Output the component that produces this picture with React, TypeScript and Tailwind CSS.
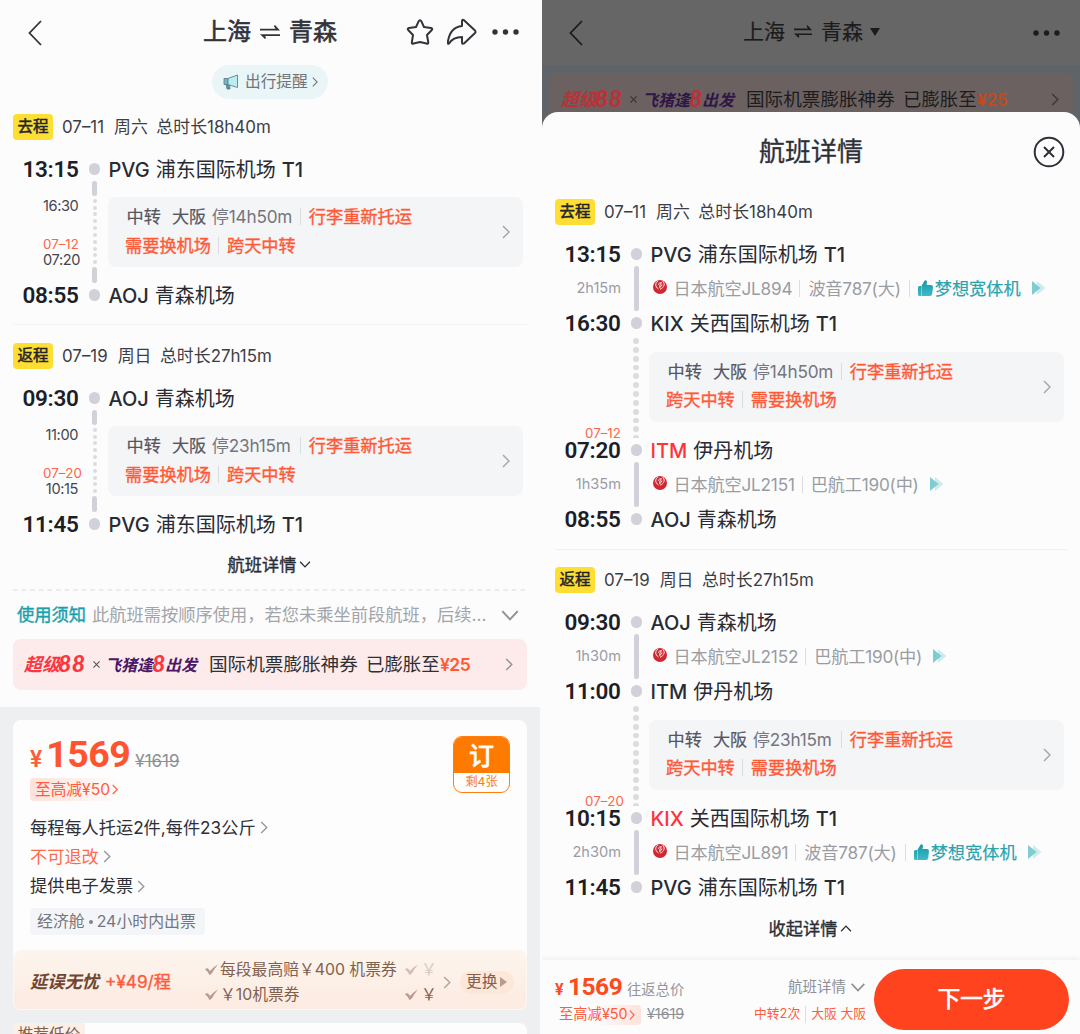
import clsx from "clsx";

const trips = [
  {
    tag: "去程",
    date: "07–11",
    weekday: "周六",
    total: "总时长18h40m",
    start: { time: "13:15", code: "PVG", name: "浦东国际机场", terminal: "T1" },
    end: { time: "08:55", code: "AOJ", name: "青森机场", terminal: "" },
    arrive: "16:30",
    nextDate: "07–12",
    depart: "07:20",
    stop: "停14h50m",
  },
  {
    tag: "返程",
    date: "07–19",
    weekday: "周日",
    total: "总时长27h15m",
    start: { time: "09:30", code: "AOJ", name: "青森机场", terminal: "" },
    end: { time: "11:45", code: "PVG", name: "浦东国际机场", terminal: "T1" },
    arrive: "11:00",
    nextDate: "07–20",
    depart: "10:15",
    stop: "停23h15m",
  },
];

const details = [
  {
    first: { duration: "2h15m", flight: "日本航空JL894", plane: "波音787(大)", dream: true },
    mid1: { time: "16:30", code: "KIX", name: "关西国际机场", terminal: "T1" },
    mid2: { time: "07:20", code: "ITM", name: "伊丹机场", terminal: "" },
    second: { duration: "1h35m", flight: "日本航空JL2151", plane: "巴航工190(中)", dream: false },
  },
  {
    first: { duration: "1h30m", flight: "日本航空JL2152", plane: "巴航工190(中)", dream: false },
    mid1: { time: "11:00", code: "ITM", name: "伊丹机场", terminal: "" },
    mid2: { time: "10:15", code: "KIX", name: "关西国际机场", terminal: "T1" },
    second: { duration: "2h30m", flight: "日本航空JL891", plane: "波音787(大)", dream: true },
  },
];

type Trip = (typeof trips)[number];
type Point = { time: string; code: string; name: string; terminal: string };
type Leg = { duration: string; flight: string; plane: string; dream: boolean };

function Right({ className }: { className?: string }) {
  return (
    <svg viewBox="0 0 8 14" fill="none" stroke="currentColor" strokeWidth="1.5" className={clsx("shrink-0", className)}>
      <path d="M1 1l6 6-6 6" />
    </svg>
  );
}

function Down({ className }: { className?: string }) {
  return (
    <svg viewBox="0 0 16 10" fill="none" stroke="currentColor" strokeWidth="1.8" className={clsx("shrink-0", className)}>
      <path d="M1 1l7 7.5L15 1" />
    </svg>
  );
}

function Back() {
  return (
    <svg viewBox="0 0 14 26" className="w-3.5 h-[26px]" fill="none" stroke="currentColor" strokeWidth="1.8">
      <path d="M13 1L1.5 13 13 25" />
    </svg>
  );
}

function RoundTrip({ className }: { className?: string }) {
  return (
    <svg viewBox="0 0 20 14" className={className} fill="currentColor">
      <path d="M0 3.800h15.500L13.800 1l1.200-.9 5 5.500H0z" />
      <path d="M20 9.200H4.500H0l5 4.700 1-.9-.8-2H20z" />
    </svg>
  );
}

function Dots() {
  return (
    <svg viewBox="0 0 27 6" className="w-[27px] h-1.5" fill="currentColor">
      <circle cx="3" cy="3" r="2.700" />
      <circle cx="13.5" cy="3" r="2.700" />
      <circle cx="24" cy="3" r="2.700" />
    </svg>
  );
}

function Horn() {
  return (
    <svg viewBox="0 0 16 16" className="w-4 h-4 shrink-0" stroke="#67808a" strokeWidth=".9">
      <path d="M3 10h3.5l.5 5H4z" fill="#3d9fb0" />
      <path d="M1 4.5h4v6H1z" fill="#6db9c9" />
      <path d="M5 4.5L14.5 1v12.5L5 10.5z" fill="#b9edf4" />
    </svg>
  );
}

function Crane() {
  return (
    <svg viewBox="0 0 14 14" className="mb-[2px] w-3.5 h-3.5 shrink-0">
      <circle cx="7" cy="7" r="7" fill="#cf2831" />
      <path d="M5 .8C1.800 3 2 7 5.500 9" stroke="#fff" strokeWidth=".9" fill="none" />
      <path d="M9.300.8C12.500 3.500 11.500 7.500 7 9.200" stroke="#fff" strokeWidth=".9" fill="none" />
      <path d="M5 4.600Q6.500 2.200 8.700 2.800L7.200 4.200 6.600 7.500Q8.800 6.500 9 4.500" stroke="#fff" strokeWidth=".9" fill="none" />
    </svg>
  );
}

function Thumb() {
  return (
    <svg viewBox="0 0 15 16" className="w-[15px] h-4 shrink-0">
      <defs>
        <linearGradient id="thumb" x1="0" y1="0" x2="0" y2="1">
          <stop offset="0" stopColor="#1797a0" />
          <stop offset="1" stopColor="#3cbccb" />
        </linearGradient>
      </defs>
      <path
        d="M0 7.500Q0 6 1.500 6H3v10H1.500Q0 16 0 14.500zM3.400 6L6.500.8Q7.200 0 8.200.5 9.200 1.200 9 2.500L8.500 5H13q2 0 2 2l-.8 7q-.3 2-2.200 2H3.400z"
        fill="url(#thumb)"
      />
    </svg>
  );
}

function Forward() {
  return (
    <svg viewBox="0 0 14 14" className="w-3.5 h-3.5 shrink-0">
      <path d="M5 0l8.500 7L5 14z" fill="#cfebee" />
      <path d="M0 0l8.500 7L0 14z" fill="#7fccd2" />
    </svg>
  );
}

function Tick() {
  return (
    <svg viewBox="0 0 13 11" className="w-[13px] h-[11px] shrink-0" fill="#b99a8d">
      <path d="M0 5.200Q1.500 4 3 4.500L5 7Q8 3 13 .5 9.500 4.500 6.800 9.500L4.500 11Q3 7.500 0 5.200z" />
    </svg>
  );
}

function Divider({ className }: { className?: string }) {
  return <span className={clsx("w-px h-[17px] bg-[#dcdde0] shrink-0", className)} />;
}

function Promo({ dim }: { dim?: boolean }) {
  const red = dim ? "text-[#b83338]" : "text-[#fb3640]";
  const purple = dim ? "text-[#301548]" : "text-[#4b1667]";
  const ink = dim ? "text-[#1d1c1c]" : "text-[#303033]";
  return (
    <>
      <span className={clsx("flex w-[64px] items-center text-[18px] font-bold italic whitespace-nowrap", red)}>
        <span className="w-[34px]">超级</span>
        <span className="pb-[3px] font-[Lato] text-[23px] leading-[18px] font-black tracking-[0.500px]">88</span>
      </span>
      <svg viewBox="0 0 8 8" className="w-[7px] h-[7px] ml-[5px] shrink-0" stroke={dim ? "#333" : "#555"} strokeWidth="1.2">
        <path d="M.5.5l7 7M7.500.5l-7 7" />
      </svg>
      <span className={clsx("flex w-[92px] items-center ml-[5px] text-[16px] font-bold italic whitespace-nowrap", purple)}>
        <span className="w-[47px]">飞猪逢</span>
        <span className={clsx("w-[13px] pb-[3px] font-[Lato] text-[23px] leading-[18px] font-black", red)}>8</span>
        <span>出发</span>
      </span>
      <span className={clsx("ml-3 w-[149px] text-[18.600px] whitespace-nowrap", ink)}>国际机票膨胀神券</span>
      <span className={clsx("ml-2 w-[74px] text-[18.400px] whitespace-nowrap", ink)}>已膨胀至</span>
      <span className={clsx("text-[17.500px] font-semibold tracking-[-0.500px]", dim ? "text-[#c04a22]" : "text-[#ff5a33]")}>¥25</span>
    </>
  );
}

function TripHeader({ trip }: { trip: Trip }) {
  return (
    <div className="flex h-[26px] items-center pl-[13px] text-[16.900px] text-[#3c3e46]">
      <span className="flex h-[26px] w-10 items-center justify-center rounded bg-[#fede33] text-[15.500px] text-[#22242c] [-webkit-text-stroke:0.500px]">
        {trip.tag}
      </span>
      <span className="ml-[9px]">{trip.date}</span>
      <span className="ml-[10px]">{trip.weekday}</span>
      <span className="ml-[8.500px]">{trip.total}</span>
    </div>
  );
}

function PointRow({ point, red }: { point: Point; red?: boolean }) {
  return (
    <div className="flex h-6 items-center">
      <span className="w-[78.500px] text-right font-[Roboto] text-[22.500px] font-semibold tracking-[-0.300px] text-[#1c1e28]">
        {point.time}
      </span>
      <span className="ml-[10px] size-[11.500px] rounded-full bg-[#d0d1d9]" />
      <span className="ml-[8.500px] flex gap-[6px] pt-px text-[20px] text-[#292b33] whitespace-nowrap">
        <span className={clsx("font-medium", red && "text-[#ff3338]")}>{point.code}</span>
        <span>{point.name}</span>
        <span className="font-medium">{point.terminal}</span>
      </span>
    </div>
  );
}

function LayoverCard({ stop, tags }: { stop: string; tags: string[] }) {
  return (
    <div className="flex h-[70px] w-[415px] items-center justify-between rounded-lg bg-[#f4f5f7] pl-[17px] pr-[13px]">
      <div className="flex flex-col pb-[2px] text-[17.200px] text-[#ff5a38]">
        <div className="flex h-[28.500px] items-center text-[#54565f] whitespace-nowrap">
          <span className="ml-[1.500px] [-webkit-text-stroke:0.200px]">中转</span>
          <span className="ml-[11px] [-webkit-text-stroke:0.200px]">大阪</span>
          <span className="ml-[5.500px] w-[81px] tracking-[-0.200px] text-[#74767f]">{stop}</span>
          <Divider className="ml-[7px]" />
          <span className="ml-[8px] text-[#ff5a38] [-webkit-text-stroke:0.350px]">行李重新托运</span>
        </div>
        <div className="flex h-[28.500px] items-center [-webkit-text-stroke:0.350px]">
          <span>{tags[0]}</span>
          <Divider className="mx-[7.500px]" />
          <span>{tags[1]}</span>
        </div>
      </div>
      <Right className="w-2 h-3.5 text-[#a7a8ad]" />
    </div>
  );
}

function Summary({ trip }: { trip: Trip }) {
  return (
    <section className="shrink-0">
      <TripHeader trip={trip} />
      <div className="mt-[17px]">
        <PointRow point={trip.start} />
        <div className="flex h-[102px]">
          <div className="w-[78px] pl-[43px] text-[14.600px] text-[#44464e]">
            <div className="mt-4 h-[18px] text-right leading-[18px] tracking-[-0.400px]">{trip.arrive}</div>
            <div className="mt-[23px] h-[13px] text-[13.300px] leading-[13px] text-[#ff6547] whitespace-nowrap">{trip.nextDate}</div>
            <div className="h-[16px] text-right leading-[18px] tracking-[-0.400px]">{trip.depart}</div>
          </div>
          <div className="ml-[14px] flex w-[5px] flex-col items-center justify-between">
            <span className="h-[15px] w-[4.500px] rounded-full bg-[#d0d1d9]" />
            {Array.from({ length: 10 }, (_, i) => (
              <span key={i} className="size-1 rounded-full bg-[#dbdcdf]" />
            ))}
            <span className="h-4 w-[4.500px] rounded-full bg-[#d0d1d9]" />
          </div>
          <div className="ml-[11px] pt-4">
            <LayoverCard stop={trip.stop} tags={["需要换机场", "跨天中转"]} />
          </div>
        </div>
        <PointRow point={trip.end} />
      </div>
    </section>
  );
}

function LegRow({ leg }: { leg: Leg }) {
  return (
    <div className="flex h-[45px] items-center text-[17.200px] text-[#9a9ca3]">
      <span className="w-[79px] text-right text-[14.600px]">{leg.duration}</span>
      <span className="ml-[13px] h-full w-[4.500px] rounded-full bg-[#d0d1d9]" />
      <span className="ml-[14px] flex items-center whitespace-nowrap tracking-[-0.200px]">
        <Crane />
        <span className="ml-[7px]">{leg.flight}</span>
        <Divider className="ml-[7px] mr-[8px]" />
        <span>{leg.plane}</span>
        {leg.dream && (
          <>
            <Divider className="mx-[8px]" />
            <Thumb />
            <span className="ml-[2px] tracking-normal text-[#2aa3ad] [-webkit-text-stroke:0.200px]">梦想宽体机</span>
          </>
        )}
        <span className="ml-[11px]">
          <Forward />
        </span>
      </span>
    </div>
  );
}

function Detail({ trip, detail }: { trip: Trip; detail: (typeof details)[number] }) {
  return (
    <section>
      <TripHeader trip={trip} />
      <div className="mt-[17px]">
        <PointRow point={trip.start} />
        <LegRow leg={detail.first} />
        <PointRow point={detail.mid1} />
        <div className="flex h-[103px]">
          <div className="flex w-[79px] flex-col justify-end pl-[43px] text-[13.300px] leading-[10px] text-[#ff6547] whitespace-nowrap">
            {trip.nextDate}
          </div>
          <div className="ml-3 flex w-[6px] flex-col gap-[3px] overflow-hidden pt-[3px]">
            {Array.from({ length: 12 }, (_, i) => (
              <span key={i} className="size-[5.850px] shrink-0 rounded-full bg-[#dbdcdf]" />
            ))}
          </div>
          <div className="ml-[10px] pt-[16.500px]">
            <LayoverCard stop={trip.stop} tags={["跨天中转", "需要换机场"]} />
          </div>
        </div>
        <PointRow point={detail.mid2} red />
        <LegRow leg={detail.second} />
        <PointRow point={trip.end} />
      </div>
    </section>
  );
}

function ListPage() {
  return (
    <div className="flex h-full w-[540px] flex-col overflow-hidden bg-[#fcfcfd]">
      <header className="flex h-[65px] shrink-0 items-center pl-[28px] pr-[21px] text-[#33343a]">
        <Back />
        <h1 className="ml-[161px] flex items-center pb-[2px] text-[24px] whitespace-nowrap [-webkit-text-stroke:0.600px]">
          上海
          <RoundTrip className="mx-[9px] w-5 h-3.5" />
          青森
        </h1>
        <div className="ml-auto flex items-center pb-[2px]">
          <svg viewBox="0 0 28 28" className="w-7 h-7" fill="none" stroke="currentColor" strokeWidth="2" strokeLinejoin="round">
            <path d="M14 2.200Q14.800 2.200 15.300 3.200L18 9l7 1Q27 10.500 25.800 12L21 17l1.300 7.500Q22.300 26.200 20.500 25.500L14 24l-6.500 1.500Q5.700 26.200 5.800 24.500L7 17 2.200 12Q1 10.500 3 10l7-1 2.700-5.800Q13.200 2.200 14 2.200z" />
          </svg>
          <svg viewBox="0 0 30 28" className="ml-[13px] w-[30px] h-7" fill="none" stroke="currentColor" strokeWidth="2" strokeLinejoin="round">
            <path d="M15 3.500Q15 1 17 2.200L28 12.500Q29 14 28 15L17 25.500Q15.200 26.500 15 24.500V19Q6 19 2 25.500 0 26.500 1 23 3.500 9 15 8z" />
          </svg>
          <span className="ml-[15px]">
            <Dots />
          </span>
        </div>
      </header>

      <div className="mx-auto flex h-[34px] w-[116px] shrink-0 items-center rounded-full bg-[#eaf5f7] pl-[11px] text-[15.700px] text-[#70757a]">
        <Horn />
        <span className="ml-[6px] whitespace-nowrap">出行提醒</span>
        <Right className="ml-[4px] w-[6px] h-[10px]" />
      </div>

      <div className="mt-[15px] shrink-0">
        <Summary trip={trips[0]} />
        <div className="mx-[13px] mt-[17px] mb-[18px] h-px bg-[#f3f3f5]" />
        <Summary trip={trips[1]} />
      </div>

      <div className="mt-4 flex h-[25px] shrink-0 items-center justify-center text-[17.200px] text-[#2b2d35]">
        <span className="[-webkit-text-stroke:0.350px]">航班详情</span>
        <Down className="ml-[3px] mr-px w-3 h-[7px]" />
      </div>

      <svg className="ml-[13px] mt-[12px] h-[2px] w-[514px] shrink-0">
        <path d="M0 1h514" stroke="#e4e5e7" strokeWidth="1.5" strokeDasharray="4.6 4" />
      </svg>

      <div className="flex h-[48px] shrink-0 items-center pl-[17px] text-[17.250px] whitespace-nowrap">
        <span className="text-[#1b9fab] [-webkit-text-stroke:0.400px]">使用须知</span>
        <span className="ml-[6px] w-[409px] text-[#a3a4a9]">此航班需按顺序使用，若您未乘坐前段航班，后续...</span>
        <Down className="w-[18px] h-[11px] text-[#909198]" />
      </div>

      <div className="mx-[13px] flex h-[51px] shrink-0 items-center rounded-lg bg-[#fcebea] pl-[11px]">
        <Promo />
        <Right className="ml-auto mr-[14px] w-2 h-[13px] text-[#96908f]" />
      </div>

      <div className="mt-[17px] min-h-0 flex-1 bg-[#edeff1] px-[13px] pt-[13px]">
        <div className="rounded-lg bg-[#fdfdfd]">
          <div className="h-[230px] px-[17px] pt-[16px]">
            <div className="flex h-[39px] items-start">
              <div className="flex h-[36px] items-baseline">
                <span className="font-[Roboto] text-[23px] font-semibold leading-9 text-[#ff5c38]">¥</span>
                <span className="ml-[4px] w-[83px] font-[Roboto] text-[37.500px] font-bold leading-9 text-[#ff5430] tracking-[-0.500px]">1569</span>
                <span className="ml-[6px] text-[17px] text-[#8e9096] line-through">¥1619</span>
              </div>
              <div className="ml-auto flex h-[57px] w-[57px] flex-col overflow-hidden rounded-[9px] border-[1.500px] border-[#ff7d12] bg-white text-center">
                <span className="h-[36px] bg-[#ff7a00] text-[25px] font-medium leading-[38px] text-white [-webkit-text-stroke:0.400px]">订</span>
                <span className="text-[12.200px] leading-[18px] text-[#f77d15]">剩4张</span>
              </div>
            </div>
            <div className="mt-[3px] flex h-[23px] w-[91px] items-center rounded-sm bg-linear-to-r from-[#fde2dc] to-[#fdfdfd] pl-[5px] text-[15.700px] text-[#ff5c3c] whitespace-nowrap">
              至高减¥50
              <Right className="ml-[2px] w-[6px] h-[11px]" />
            </div>
            <div className="mt-[12px] flex flex-col text-[17.200px] text-[#2d2f38]">
              <div className="flex h-[29px] items-center">
                每程每人托运2件,每件23公斤
                <Right className="ml-1 w-2 h-[13px] text-[#96979d]" />
              </div>
              <div className="flex h-[29px] items-center text-[#ff694c]">
                不可退改
                <Right className="ml-1 w-2 h-[13px] text-[#96979d]" />
              </div>
              <div className="flex h-[30px] items-center">
                提供电子发票
                <Right className="ml-1 w-2 h-[13px] text-[#96979d]" />
              </div>
            </div>
            <div className="mt-[7px] flex h-[27px] w-[175px] items-center rounded bg-[#f4f5f8] pl-[7px] text-[15.900px] text-[#74767e] whitespace-nowrap">
              经济舱
              <span className="mx-[4px] size-1 rounded-full bg-[#82848b]" />
              24小时内出票
            </div>
          </div>
          <div className="flex h-[60px] items-center rounded-lg border border-[#fef6f0] bg-linear-to-b from-[#fcf5ee] to-[#fcebe1] pl-[16px] pt-1 text-[#82604e] whitespace-nowrap">
            <span className="w-[71px] text-[17.300px] font-bold italic text-[#704631]">延误无忧</span>
            <span className="ml-1 w-[67px] text-[17.200px] text-[#ff5a3c] [-webkit-text-stroke:0.350px]">+¥49/程</span>
            <div className="ml-[33px] w-[200px] text-[15.800px]">
              <div className="flex h-[25px] items-center">
                <Tick />
                <span className="ml-[2px]">每段最高赔￥400 机票券</span>
              </div>
              <div className="flex h-[25px] items-center">
                <Tick />
                <span className="ml-[2px]">￥10机票券</span>
              </div>
            </div>
            <div className="w-[38px] text-[15.800px]">
              <div className="flex h-[25px] items-center">
                <span className="opacity-60">
                  <Tick />
                </span>
                <span className="ml-[3px] text-[#d8cbc3]">￥</span>
              </div>
              <div className="flex h-[25px] items-center">
                <Tick />
                <span className="ml-[3px]">￥</span>
              </div>
            </div>
            <Right className="w-2 h-[13px] text-[#b7a195]" />
            <span className="ml-[9px] flex h-[23px] w-[54px] items-center rounded-full bg-[#fce7d8] pl-[6px] text-[15.700px]">
              更换
              <svg viewBox="0 0 7 10" className="ml-[3px] w-[7px] h-[10px]" fill="#b99a8d">
                <path d="M0 0l7 5-7 5z" />
              </svg>
            </span>
          </div>
        </div>
        <div className="mt-[13px] h-10 rounded-lg bg-[#fdfdfd]">
          <div className="flex h-6 w-[72px] items-center justify-center rounded-tl-lg bg-[#fbf0e8] text-[15.700px] text-[#82604e]">
            推荐低价
          </div>
        </div>
      </div>
    </div>
  );
}

function DetailPage() {
  return (
    <div className="relative ml-[2px] h-full w-[538px] overflow-hidden bg-[#5f6468]">
      <header className="flex h-[65px] items-center bg-[#666] pl-[27px] pr-[20px] text-[#1b1b1d]">
        <Back />
        <h1 className="ml-[160px] flex items-center pb-[2px] text-[21px] whitespace-nowrap [-webkit-text-stroke:0.200px]">
          上海
          <RoundTrip className="mx-[9px] w-[18px] h-[13px]" />
          青森
          <svg viewBox="0 0 10 8" className="ml-[7px] w-[10px] h-2" fill="currentColor">
            <path d="M0 0h10L5 8z" />
          </svg>
        </h1>
        <span className="ml-auto">
          <Dots />
        </span>
      </header>
      <div className="ml-2 mt-2 flex h-[53px] w-[523px] items-center rounded-lg bg-[#6b6160] pl-[11px]">
        <Promo dim />
        <Right className="ml-auto mr-[14px] w-2 h-[13px] text-[#3b3736]" />
      </div>

      {/* bottom sheet */}
      <div className="absolute inset-x-0 bottom-0 top-[112px] flex flex-col rounded-t-[16px] bg-[#fcfcfd]">
        <div className="relative flex h-[79px] items-center justify-center text-[26px] text-[#2e3038]">
          <span className="[-webkit-text-stroke:0.300px]">航班详情</span>
          <svg viewBox="0 0 32 32" className="absolute right-[15px] top-[24px] w-8 h-8" fill="none" stroke="#2e3038" strokeWidth="2">
            <circle cx="16" cy="16" r="14.300" />
            <path d="M11 11l10 10M21 11L11 21" />
          </svg>
        </div>

        <div className="mt-2">
          <Detail trip={trips[0]} detail={details[0]} />
          <div className="mx-[13px] mt-[18px] mb-[17px] h-px bg-[#f0f0f2]" />
          <Detail trip={trips[1]} detail={details[1]} />
        </div>

        <div className="mt-[17px] flex h-[25px] items-center justify-center text-[17.200px] text-[#2b2d35]">
          <span className="[-webkit-text-stroke:0.350px]">收起详情</span>
          <Down className="ml-[3px] mr-px w-3 h-[7px] rotate-180" />
        </div>

        <footer className="mt-auto flex h-[74px] shrink-0 items-center pl-[13px] pr-[11px] shadow-[0_-2px_5px_rgba(0,0,0,0.05)]">
          <div className="w-[200px] pt-[5px] whitespace-nowrap">
            <div className="flex h-7 items-baseline leading-7 text-[#ff4a1d]">
              <span className="w-[13px] font-[Roboto] text-[16px] font-bold">¥</span>
              <span className="w-[54px] font-[Roboto] text-[24.500px] font-bold tracking-[-0.500px]">1569</span>
              <span className="ml-[5px] text-[14.300px] text-[#94969c]">往返总价</span>
            </div>
            <div className="flex h-[25px] items-center pt-[2px]">
              <span className="flex h-5 w-[86px] items-center rounded-sm bg-linear-to-r from-[#fcfcfd] from-45% to-[#fde2dc] pl-1 text-[14.300px] text-[#ff5c3c]">
                至高减¥50
                <Right className="ml-[2px] w-[6px] h-[10px]" />
              </span>
              <span className="ml-[6px] text-[14.300px] text-[#8e9096] line-through">¥1619</span>
            </div>
          </div>
          <div className="ml-auto mr-[8px] flex flex-col items-end pt-[5px] whitespace-nowrap">
            <div className="flex h-7 items-center text-[14.500px] text-[#8e9096]">
              航班详情
              <Down className="ml-1 w-4 h-[9px]" />
            </div>
            <div className="flex h-[25px] items-center pt-[2px] text-[12.800px] text-[#ff5c3c]">
              中转2次
              <Divider className="mx-[5px] h-[12px]" />
              大阪 大阪
            </div>
          </div>
          <button className="mt-1 h-[61px] w-[195px] shrink-0 rounded-full bg-[#ff431f] text-[22.500px] text-white [-webkit-text-stroke:0.700px]">
            下一步
          </button>
        </footer>
      </div>
    </div>
  );
}

export default function App() {
  return (
    <div className="flex h-[1034px] w-[1080px] overflow-hidden bg-[#fcfcfd] font-['Inter','Noto_Sans_CJK_SC',sans-serif] leading-none">
      <ListPage />
      <DetailPage />
    </div>
  );
}
